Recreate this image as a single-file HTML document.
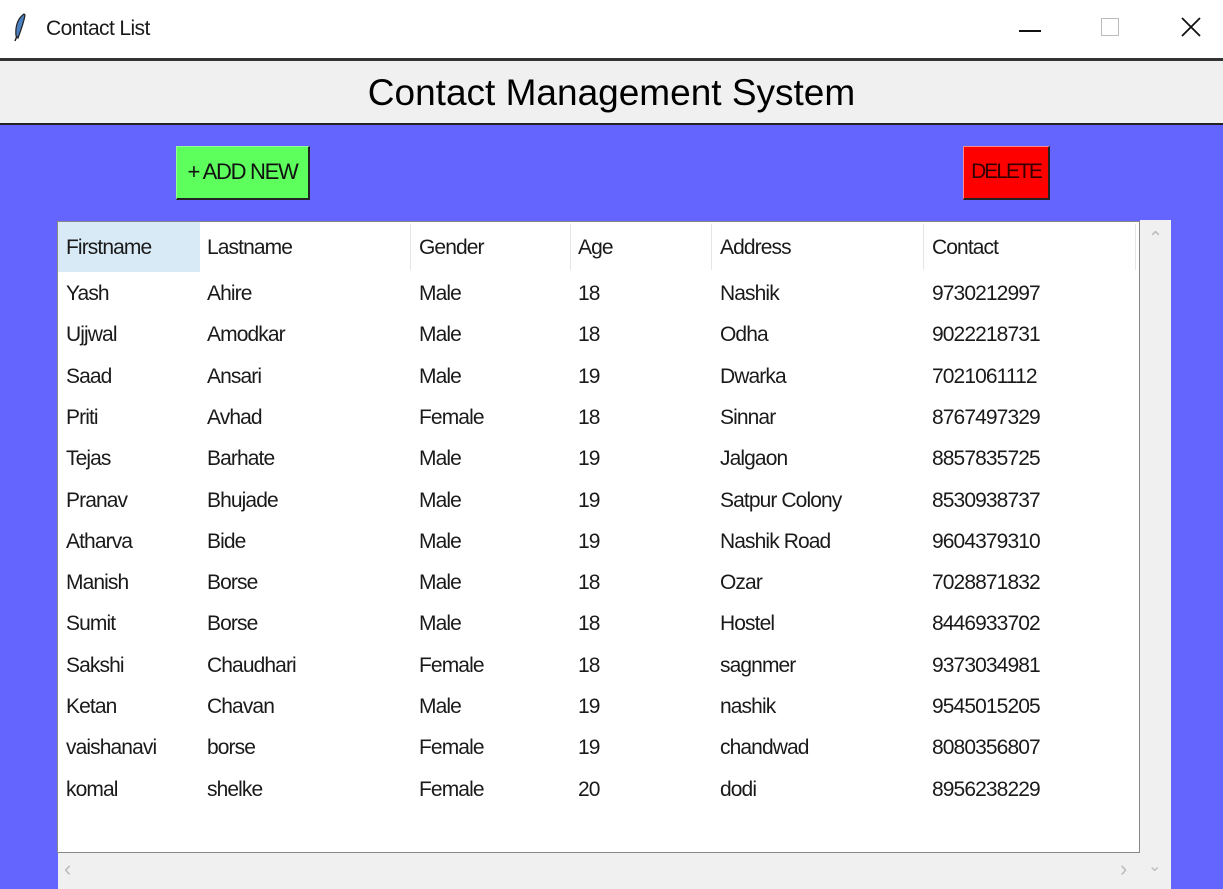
<!DOCTYPE html>
<html><head><style>
*{margin:0;padding:0;box-sizing:border-box}
body{width:1223px;height:889px;position:relative;overflow:hidden;background:#fff;font-family:"Liberation Sans",sans-serif;color:#111}
.abs{position:absolute}
.t{position:absolute;font-size:21px;white-space:nowrap;letter-spacing:-0.9px;color:#1a1a1a}
</style></head><body>
<div class="abs" style="left:0;top:0;width:1223px;height:58px;background:#fff"></div>
<svg class="abs" style="left:12px;top:12px" width="16" height="30" viewBox="0 0 16 30"><path d="M12 2 C6 6 3 14 4 24 L6 26 C9 18 12 10 13 3 Z" fill="#4a7fc0" stroke="#222" stroke-width="1.2"/><path d="M5 24 L3 29" stroke="#222" stroke-width="1.5"/></svg>
<div class="t" style="left:46px;top:17px;font-size:21px;letter-spacing:-0.6px">Contact List</div>
<div class="abs" style="left:1019px;top:30px;width:22px;height:2px;background:#111"></div>
<div class="abs" style="left:1101px;top:18px;width:18px;height:18px;border:1px solid #bbb"></div>
<svg class="abs" style="left:1180px;top:16px" width="22" height="22" viewBox="0 0 22 22"><path d="M2 2 L20 20 M20 2 L2 20" stroke="#111" stroke-width="1.8"/></svg>
<div class="abs" style="left:0;top:58px;width:1223px;height:3px;background:#333"></div>
<div class="abs" style="left:0;top:61px;width:1223px;height:62px;background:#f0f0f0"></div>
<div class="abs" style="left:0;top:123px;width:1223px;height:2px;background:#222"></div>
<div class="abs" style="left:0;top:72px;width:1223px;text-align:center;font-size:37px;color:#000">Contact Management System</div>
<div class="abs" style="left:0;top:125px;width:1223px;height:764px;background:#6464ff"></div>
<div class="abs" style="left:176px;top:146px;width:134px;height:54px;background:#5cff5c;border-right:2px solid #222;border-bottom:2px solid #222;border-top:1px solid #9f9;border-left:1px solid #9f9;font-size:22px;line-height:50px;text-align:center;letter-spacing:-1.3px">+ ADD NEW</div>
<div class="abs" style="left:963px;top:146px;width:87px;height:54px;background:#ff0000;border-right:2px solid #222;border-bottom:2px solid #222;border-top:1px solid #f88;border-left:1px solid #f88;font-size:21px;line-height:50px;text-align:center;letter-spacing:-2px;color:#300">DELETE</div>
<div class="abs" style="left:57px;top:221px;width:1083px;height:632px;background:#fff;border:1px solid #888"></div>
<div class="abs" style="left:58px;top:222px;width:142px;height:50px;background:#d9eaf7"></div>
<div class="abs" style="left:410px;top:224px;width:1px;height:46px;background:#e5e5e5"></div>
<div class="abs" style="left:570px;top:224px;width:1px;height:46px;background:#e5e5e5"></div>
<div class="abs" style="left:711px;top:224px;width:1px;height:46px;background:#e5e5e5"></div>
<div class="abs" style="left:923px;top:224px;width:1px;height:46px;background:#e5e5e5"></div>
<div class="abs" style="left:1135px;top:224px;width:1px;height:46px;background:#e5e5e5"></div>
<div class="abs" style="left:1140px;top:220px;width:31px;height:669px;background:#f0f0f0"></div>
<div class="abs" style="left:58px;top:853px;width:1082px;height:36px;background:#f0f0f0"></div>
<div class="t" style="left:1148px;top:228px;color:#bbb;font-size:18px">&#8963;</div>
<div class="t" style="left:64px;top:856px;color:#bbb;font-size:22px">&lsaquo;</div>
<div class="t" style="left:1120px;top:856px;color:#bbb;font-size:22px">&rsaquo;</div>
<div class="t" style="left:1148px;top:856px;color:#bbb;font-size:16px">&#8964;</div>
<div id="rows"></div>
<script>
var cols=[66,207,419,578,720,932];
var data=[["Firstname","Lastname","Gender","Age","Address","Contact"],
["Yash","Ahire","Male","18","Nashik","9730212997"],
["Ujjwal","Amodkar","Male","18","Odha","9022218731"],
["Saad","Ansari","Male","19","Dwarka","7021061112"],
["Priti","Avhad","Female","18","Sinnar","8767497329"],
["Tejas","Barhate","Male","19","Jalgaon","8857835725"],
["Pranav","Bhujade","Male","19","Satpur Colony","8530938737"],
["Atharva","Bide","Male","19","Nashik Road","9604379310"],
["Manish","Borse","Male","18","Ozar","7028871832"],
["Sumit","Borse","Male","18","Hostel","8446933702"],
["Sakshi","Chaudhari","Female","18","sagnmer","9373034981"],
["Ketan","Chavan","Male","19","nashik","9545015205"],
["vaishanavi","borse","Female","19","chandwad","8080356807"],
["komal","shelke","Female","20","dodi","8956238229"]];
var h="";
data.forEach(function(r,i){var y=i==0?236:282+(i-1)*41.3;
r.forEach(function(c,j){h+='<div class="t" style="left:'+cols[j]+'px;top:'+y+'px">'+c+'</div>';});});
document.getElementById("rows").innerHTML=h;
</script>
</body></html>
